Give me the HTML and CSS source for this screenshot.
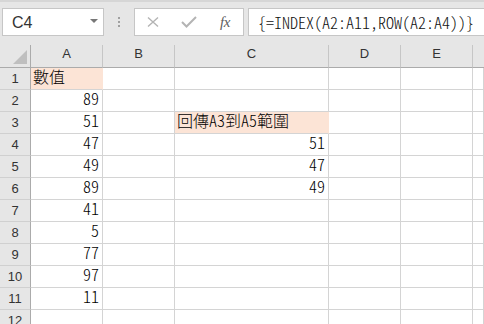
FILE: index.html
```html
<!DOCTYPE html>
<html>
<head>
<meta charset="utf-8">
<link rel="stylesheet" href="styles.css">
</head>
<body>
<div class="app">
  <div class="toolbar">
    <div class="namebox">
      <span class="name">C4</span>
      <span class="caret"></span>
    </div>
    <div class="dots"><i></i><i></i><i></i></div>
    <div class="btns">
      <span class="btn">
        <svg width="12" height="12" viewBox="0 0 12 12"><path d="M1 1.5 L11 10.5 M11 1.5 L1 10.5" stroke="#b4b4b4" stroke-width="1.4" fill="none"/></svg>
      </span>
      <span class="btn">
        <svg width="16" height="12" viewBox="0 0 16 12"><path d="M1 6 L5.5 10.5 L15 1" stroke="#b4b4b4" stroke-width="2" fill="none"/></svg>
      </span>
      <span class="btn fx">fx</span>
    </div>
    <div class="formula">{=INDEX(A2:A11,ROW(A2:A4))}</div>
  </div>
  <div class="sheet">
    <div class="corner"><span class="tri"></span></div>
    <div class="ch">A</div><div class="ch">B</div><div class="ch">C</div><div class="ch">D</div><div class="ch">E</div><div class="ch last"></div>

    <div class="rh">1</div><div class="c fill">數值</div><div class="c"></div><div class="c"></div><div class="c"></div><div class="c"></div><div class="c"></div>
    <div class="rh">2</div><div class="c n">89</div><div class="c"></div><div class="c"></div><div class="c"></div><div class="c"></div><div class="c"></div>
    <div class="rh">3</div><div class="c n">51</div><div class="c"></div><div class="c fill">回傳A3到A5範圍</div><div class="c"></div><div class="c"></div><div class="c"></div>
    <div class="rh">4</div><div class="c n">47</div><div class="c"></div><div class="c n">51</div><div class="c"></div><div class="c"></div><div class="c"></div>
    <div class="rh">5</div><div class="c n">49</div><div class="c"></div><div class="c n">47</div><div class="c"></div><div class="c"></div><div class="c"></div>
    <div class="rh">6</div><div class="c n">89</div><div class="c"></div><div class="c n">49</div><div class="c"></div><div class="c"></div><div class="c"></div>
    <div class="rh">7</div><div class="c n">41</div><div class="c"></div><div class="c"></div><div class="c"></div><div class="c"></div><div class="c"></div>
    <div class="rh">8</div><div class="c n">5</div><div class="c"></div><div class="c"></div><div class="c"></div><div class="c"></div><div class="c"></div>
    <div class="rh">9</div><div class="c n">77</div><div class="c"></div><div class="c"></div><div class="c"></div><div class="c"></div><div class="c"></div>
    <div class="rh">10</div><div class="c n">97</div><div class="c"></div><div class="c"></div><div class="c"></div><div class="c"></div><div class="c"></div>
    <div class="rh">11</div><div class="c n">11</div><div class="c"></div><div class="c"></div><div class="c"></div><div class="c"></div><div class="c"></div>
    <div class="rh">12</div><div class="c"></div><div class="c"></div><div class="c"></div><div class="c"></div><div class="c"></div><div class="c"></div>
  </div>
</div>
</body>
</html>
```

FILE: styles.css
```css
* { box-sizing: border-box; }
html, body { margin: 0; padding: 0; }
body {
  width: 484px;
  height: 324px;
  overflow: hidden;
  background: #ffffff;
  font-family: "Liberation Sans", Arial, sans-serif;
}
.app { width: 484px; }

.toolbar {
  height: 45px;
  background: #e6e6e6;
  border-top: 2px solid #d6d6d6;
  padding-top: 6px;
  display: flex;
  align-items: flex-start;
}
.namebox {
  margin-left: 2px;
  width: 102px;
  height: 28px;
  background: #fff;
  border: 1px solid #c6c6c6;
  display: flex;
  align-items: center;
  justify-content: space-between;
  padding: 0 5px 0 9px;
}
.name {
  font-size: 16px;
  color: #333;
  padding-top: 1px;
}
.caret {
  width: 0;
  height: 0;
  border-left: 4px solid transparent;
  border-right: 4px solid transparent;
  border-top: 4px solid #777;
  margin-top: -2px;
}
.dots {
  width: 30px;
  height: 28px;
  display: flex;
  flex-direction: column;
  align-items: center;
  justify-content: center;
  gap: 2px;
}
.dots i {
  display: block;
  width: 2px;
  height: 2px;
  background: #a0a0a0;
}
.btns {
  width: 110px;
  height: 28px;
  background: #fff;
  border: 1px solid #c6c6c6;
  display: grid;
  grid-template-columns: 36px 36px 36px;
  align-items: center;
}
.btn {
  display: flex;
  justify-content: center;
  align-items: center;
}
.fx {
  font-family: "Liberation Serif", serif;
  font-style: italic;
  font-size: 15px;
  color: #5e5e5e;
  letter-spacing: -0.5px;
  padding-top: 1px;
}
.formula {
  margin-left: 4px;
  flex: 1;
  height: 28px;
  background: #fff;
  border: 1px solid #c6c6c6;
  border-right: none;
  padding-left: 9px;
  font-family: "Noto Sans CJK TC", sans-serif;
  font-feature-settings: "hwid" 1;
  font-weight: 300;
  font-size: 16px;
  line-height: 26px;
  color: #111;
  white-space: nowrap;
}

.sheet {
  display: grid;
  grid-template-columns: 31px 72px 72px 154px 72px 72px 1fr;
  grid-template-rows: 23px repeat(12, 22px);
}
.corner {
  background: #e6e6e6;
  border-right: 1px solid #ababab;
  border-bottom: 1px solid #ababab;
  position: relative;
}
.tri {
  position: absolute;
  left: 13px;
  top: 5px;
  width: 0;
  height: 0;
  border-left: 14px solid transparent;
  border-bottom: 14px solid #bfbfbf;
}
.ch {
  background: #e6e6e6;
  border-right: 1px solid #c6c6c6;
  border-bottom: 1px solid #ababab;
  font-size: 13px;
  color: #333;
  text-align: center;
  line-height: 18px;
}
.ch.last { border-right: none; }
.rh {
  background: #e6e6e6;
  border-right: 1px solid #ababab;
  border-bottom: 1px solid #d0d0d0;
  font-size: 13px;
  color: #333;
  text-align: center;
  line-height: 22px;
}
.c {
  border-right: 1px solid #d4d4d4;
  border-bottom: 1px solid #d4d4d4;
  font-family: "Noto Sans CJK TC", sans-serif;
  font-feature-settings: "hwid" 1;
  font-weight: 300;
  font-size: 16px;
  line-height: 16px;
  color: #000;
  padding: 0 3px 5px 2px;
  display: flex;
  align-items: flex-end;
  white-space: nowrap;
}
.c.n { justify-content: flex-end; }
.c.fill {
  background: #fce4d6;
  border-right-color: #fce4d6;
}
```
